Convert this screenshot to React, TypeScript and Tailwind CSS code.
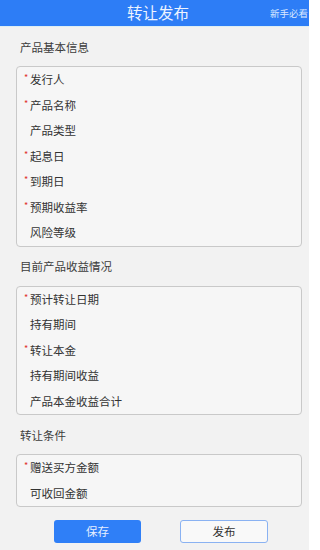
import React from "react";

type Row = { label: string; req?: boolean };

const sec1: Row[] = [
  { label: "发行人", req: true },
  { label: "产品名称", req: true },
  { label: "产品类型" },
  { label: "起息日", req: true },
  { label: "到期日", req: true },
  { label: "预期收益率", req: true },
  { label: "风险等级" },
];
const sec2: Row[] = [
  { label: "预计转让日期", req: true },
  { label: "持有期间" },
  { label: "转让本金", req: true },
  { label: "持有期间收益" },
  { label: "产品本金收益合计" },
];
const sec3: Row[] = [
  { label: "赠送买方金额", req: true },
  { label: "可收回金额" },
];

function Title({ text }: { text: string }) {
  return (
    <div className="h-[39px] flex items-center pl-5 pt-[2px] text-[11.5px] leading-none text-[#3c3c3c]">
      {text}
    </div>
  );
}

function Card({ rows }: { rows: Row[] }) {
  return (
    <div className="ml-4 mr-[7px] border border-[#c9c9c9] rounded-[4px] bg-[#f6f6f6]">
      {rows.map((r) => (
        <div key={r.label} className="relative h-[25.5px] flex items-center pl-[13px] text-[11.5px] leading-none text-[#333]">
          {r.req && (
            <span className="absolute left-[7px] top-[6px] text-[9px] leading-none text-[#e0312b]">*</span>
          )}
          {r.label}
        </div>
      ))}
    </div>
  );
}

export default function App() {
  return (
    <div
      className="w-[309px] h-[550px] overflow-hidden bg-[#f2f2f2]"
      style={{ fontFamily: '"Noto Sans CJK SC", "Noto Sans", sans-serif' }}
    >
      <div className="relative h-[27px] bg-[#2d7df6] flex items-center justify-center pl-[7px] border-b border-[#dceef4]">
        <span className="text-[15.5px] leading-none text-[#eef4ff]">转让发布</span>
        <span className="absolute right-[1px] top-[9px] text-[9.5px] leading-none text-[#dbe8ff] whitespace-nowrap">新手必看</span>
      </div>
      <Title text="产品基本信息" />
      <Card rows={sec1} />
      <Title text="目前产品收益情况" />
      <Card rows={sec2} />
      <Title text="转让条件" />
      <Card rows={sec3} />
      <div className="flex pl-[54px] gap-[39px] mt-[13px]">
        <div className="w-[87px] h-[23px] rounded-[3px] bg-[#2f7ff7] flex items-center justify-center text-[11.5px] text-[#e6efff]">
          保存
        </div>
        <div className="w-[88px] h-[23px] rounded-[3px] border border-[#8ab2f2] bg-[#f9f9f9] flex items-center justify-center text-[11.5px] text-[#333]">
          发布
        </div>
      </div>
    </div>
  );
}
